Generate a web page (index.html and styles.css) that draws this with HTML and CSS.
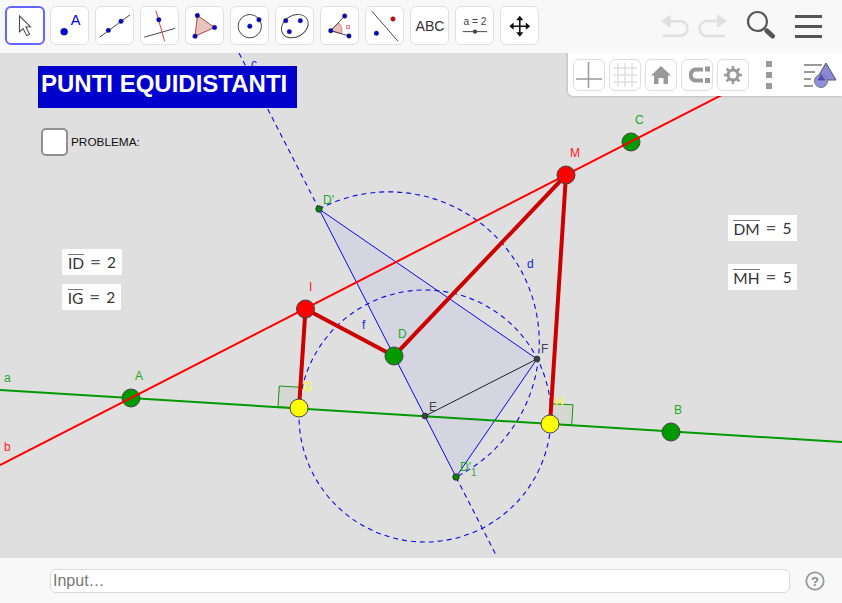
FILE: index.html
```html
<!DOCTYPE html>
<html lang="it">
<head>
<meta charset="utf-8">
<title>Punti equidistanti</title>
<link rel="stylesheet" href="styles.css">
</head>
<body>
<div class="app">
  <header class="toolbar">
    <div class="tools">
      <button class="tool active"><svg viewBox="0 0 38 38"><path class="arrow" d="M13 8.500 L25 20.500 L20 20.700 L24 28.500 L20.800 30 L17 22.300 L13 26 Z"/></svg></button>
      <button class="tool"><svg viewBox="0 0 38 38"><circle class="pt" cx="13.500" cy="25.300" r="3.600"/><text class="ic-a" x="25.300" y="19">A</text></svg></button>
      <button class="tool"><svg viewBox="0 0 38 38"><line class="ink" x1="3.700" y1="31" x2="35" y2="8"/><circle class="pt" cx="12.700" cy="24" r="2.300"/><circle class="pt" cx="25.700" cy="14.700" r="2.300"/></svg></button>
      <button class="tool"><svg viewBox="0 0 38 38"><line class="ink" x1="3.300" y1="31" x2="35" y2="22"/><line class="rd" x1="15.300" y1="3.700" x2="24.300" y2="35.300"/><circle class="pt" cx="18.300" cy="13" r="2.300"/></svg></button>
      <button class="tool"><svg viewBox="0 0 38 38"><path class="wedge" d="M11.700 8.700 L29.300 21 L9.300 30 Z"/><circle class="pt" cx="11.700" cy="8.700" r="2.300"/><circle class="pt" cx="29.300" cy="21" r="2.300"/><circle class="pt" cx="9.300" cy="30" r="2.300"/></svg></button>
      <button class="tool"><svg viewBox="0 0 38 38"><circle class="ink" cx="19.300" cy="19.700" r="12"/><circle class="pt" cx="19.300" cy="19.700" r="2.300"/><circle class="pt" cx="28.700" cy="13" r="2.300"/></svg></button>
      <button class="tool"><svg viewBox="0 0 38 38"><ellipse class="ink" cx="19.300" cy="19.700" rx="14.500" ry="11" transform="rotate(-30 19.300 19.700)"/><circle class="pt" cx="10" cy="14" r="2.300"/><circle class="pt" cx="25" cy="14" r="2.300"/><circle class="pt" cx="13.700" cy="25.300" r="2.300"/></svg></button>
      <button class="tool"><svg viewBox="0 0 38 38"><path class="wedge-a" d="M10 24.300 L18 16 A12 12 0 0 1 21 27.500 Z"/><path class="ink" d="M24.300 9.300 L10 24.300 L28.700 29.700"/><circle class="pt" cx="24.300" cy="9.300" r="2.300"/><circle class="pt" cx="10" cy="24.300" r="2.300"/><circle class="pt" cx="28.700" cy="29.700" r="2.300"/><text class="ic-alpha" x="25.500" y="22.500">α</text></svg></button>
      <button class="tool"><svg viewBox="0 0 38 38"><line class="ink" x1="6" y1="4.300" x2="33" y2="35.300"/><circle class="pt" cx="10.700" cy="27" r="2.300"/><circle class="pt-red" cx="27.700" cy="12.300" r="2.300"/></svg></button>
      <button class="tool"><svg viewBox="0 0 38 38"><text class="ic-abc" x="19.500" y="24.800">ABC</text></svg></button>
      <button class="tool"><svg viewBox="0 0 38 38"><text class="ic-slider" x="19.500" y="18">a = 2</text><line class="ink" x1="7" y1="25.300" x2="32" y2="25.300"/><circle class="dark" cx="19.500" cy="25.300" r="2.200"/></svg></button>
      <button class="tool"><svg viewBox="0 0 38 38"><path class="ink-bold" d="M19.300 11 V28.500 M10.500 19.700 H28"/><path class="fill-k" d="M19.300 9 L23 13.500 H15.600 Z M19.300 30.500 L23 26 H15.600 Z M8.500 19.700 L13 16 V23.400 Z M30 19.700 L25.500 16 V23.400 Z"/></svg></button>
    </div>
    <div class="actions">
      <svg class="hist" viewBox="0 0 30 26"><path class="hist-line" d="M5 8 H20 A7.500 7.500 0 0 1 20 23 H2"/><path class="hist-head" d="M0 8 L10 1 V15 Z"/></svg>
      <svg class="hist" viewBox="0 0 30 26"><path class="hist-line" d="M25 8 H10 A7.500 7.500 0 0 0 10 23 H28"/><path class="hist-head" d="M30 8 L20 1 V15 Z"/></svg>
      <svg class="search" viewBox="0 0 30 30"><circle class="lens" cx="11.500" cy="11.500" r="9.500"/><path class="handle" d="M19 19 L21 21"/><path class="handle-bold" d="M21 21 L26.500 26"/></svg>
      <div class="burger"><span></span><span></span><span></span></div>
    </div>
  </header>

  <main class="canvas">
    <svg class="geo" viewBox="0 0 842 505">
      <g transform="translate(0,-53)">
        <path class="kite" d="M319 209 L537 359 L456 477 Z"/>
        <path class="angle-mark" d="M279.300 386 L278 406.800 L299 408 L301 387.300 Z"/>
        <path class="angle-mark" d="M552 404 L573 404.700 L571.700 425.300 L550 424 Z"/>
        <circle class="dash-arc" cx="425" cy="416" r="126"/>
        <path class="dash-arc" d="M319 209 A150.500 150.500 0 1 1 456 477"/>
        <line class="dash-line" x1="239" y1="53" x2="319" y2="209"/>
        <line class="dash-line" x1="456" y1="477" x2="496" y2="555"/>
        <path class="blue-line" d="M319 209 L537 359 L456 477 Z"/>
        <line class="black-line" x1="425" y1="416" x2="537" y2="359"/>
        <line class="green-line" x1="0" y1="390" x2="842" y2="442"/>
        <circle class="p-green" cx="131" cy="398" r="9"/>
        <circle class="p-green" cx="631" cy="142" r="9"/>
        <circle class="p-green" cx="671" cy="432" r="9"/>
        <line class="red-line" x1="0" y1="465" x2="740" y2="85.700"/>
        <path class="seg" d="M305.500 309 L299 408 M305.500 309 L394 356 L566 175 L550 424"/>
        <circle class="p-red" cx="305.500" cy="309" r="9"/>
        <circle class="p-red" cx="566" cy="175" r="9"/>
        <circle class="p-green" cx="394" cy="356" r="9"/>
        <circle class="p-yellow" cx="299" cy="408" r="9"/>
        <circle class="p-yellow" cx="550" cy="424" r="9"/>
        <circle class="p-small" cx="425" cy="416" r="3"/>
        <circle class="p-small" cx="537" cy="359" r="3"/>
        <circle class="p-tiny" cx="319" cy="209" r="3.200"/>
        <circle class="p-tiny" cx="456" cy="477" r="3.200"/>
        <text class="lb lb-blue" x="251" y="68">c</text>
        <text class="lb lb-green" x="4" y="382">a</text>
        <text class="lb lb-red" x="4" y="451">b</text>
        <text class="lb lb-green" x="135" y="380">A</text>
        <text class="lb lb-green" x="674" y="414">B</text>
        <text class="lb lb-green" x="635" y="124">C</text>
        <text class="lb lb-red" x="570" y="157">M</text>
        <text class="lb lb-red" x="309" y="291">I</text>
        <text class="lb lb-green" x="398" y="338">D</text>
        <text class="lb lb-blue" x="362" y="329">f</text>
        <text class="lb lb-yellow" x="303" y="391">G</text>
        <text class="lb lb-dark" x="429" y="411">E</text>
        <text class="lb lb-dark" x="541" y="353">F</text>
        <text class="lb lb-yellow" x="555" y="406">H</text>
        <text class="lb lb-green" x="323" y="204">D'</text>
        <text class="lb lb-green" x="460" y="471">D'</text>
        <text class="lb-sub" x="471" y="476">1</text>
        <text class="lb lb-blue" x="527" y="268">d</text>
      </g>
    </svg>

    <h1 class="title">PUNTI EQUIDISTANTI</h1>
    <label class="check"><span class="box"></span><span>PROBLEMA:</span></label>

    <div class="value v-id"><span class="over">ID</span><span class="eq">=</span><span>2</span></div>
    <div class="value v-ig"><span class="over">IG</span><span class="eq">=</span><span>2</span></div>
    <div class="value v-dm"><span class="over">DM</span><span class="eq">=</span><span>5</span></div>
    <div class="value v-mh"><span class="over">MH</span><span class="eq">=</span><span>5</span></div>

    <aside class="style-bar">
      <button class="mini"><svg viewBox="0 0 30 30"><path class="axes" d="M14.500 2 V28 M2 19 H28"/></svg></button>
      <button class="mini"><svg viewBox="0 0 30 30"><path class="grid" d="M8 3 V27 M15 3 V27 M22 3 V27 M3 8 H27 M3 15 H27 M3 22 H27"/></svg></button>
      <button class="mini"><svg viewBox="0 0 30 30"><path class="g-fill" d="M15 6 L25 15.500 H22 V24 H17.500 V18 H12.500 V24 H8 V15.500 H5 Z"/></svg></button>
      <button class="mini"><svg viewBox="0 0 30 30"><path class="magnet" d="M21 9.500 H13 A5.700 5.700 0 0 0 13 20.500 H21"/><path class="g-fill" d="M23 6.500 H28 V11.500 H23 Z M23 18 H28 V23 H23 Z"/></svg></button>
      <button class="mini"><svg viewBox="0 0 30 30"><circle class="gear" cx="15" cy="15" r="5"/><path class="gear-teeth" d="M15 6 V9.500 M15 20.500 V24 M6 15 H9.500 M20.500 15 H24 M8.600 8.600 L11 11 M19 19 L21.400 21.400 M8.600 21.400 L11 19 M19 11 L21.400 8.600"/></svg></button>
      <div class="dots"><span></span><span></span><span></span></div>
      <svg class="style-icon" viewBox="0 0 34 26"><path class="s-lines" d="M1 3 H19 M1 10 H12 M1 17 H8 M1 24 H10"/><path class="s-tri" d="M23 1 L33 18 H13 Z"/><circle class="s-circ" cx="18" cy="19" r="6.500"/><path class="s-core" d="M18 13 L22 18 H15 Z"/></svg>
    </aside>
  </main>

  <footer class="inputbar">
    <input class="input" type="text" placeholder="Input…">
    <svg class="help" viewBox="0 0 20 20"><circle class="help-ring" cx="10" cy="10" r="8.700"/><text class="help-q" x="10" y="14.500">?</text></svg>
  </footer>
</div>
</body>
</html>
```
FILE: styles.css
```css
* { box-sizing: border-box; }
html, body { margin: 0; height: 100%; overflow: hidden; }
body { font-family: "Liberation Sans", Arial, sans-serif; }

.app { display: flex; flex-direction: column; width: 842px; height: 603px; background: #f8f8f8; }

/* top toolbar */
.toolbar { height: 53px; flex: none; display: flex; justify-content: space-between; align-items: flex-start; background: #f8f8f8; padding: 6px 20px 0 5px; }
.tools { display: flex; gap: 6px; }
.tool { width: 39px; height: 39px; padding: 0; background: #fff; border: 1px solid #e0e0e0; border-radius: 6px; display: block; }
.tool.active { border: 2px solid #6666ff; width: 40px; margin-right: -1px; }
.tool svg { display: block; width: 37px; height: 37px; }
.tool.active svg { width: 36px; height: 35px; }

.arrow { fill: #fff; stroke: #444; stroke-width: 1.100; }
.pt { fill: #0000dd; stroke: #222; stroke-width: .5; }
.pt-red { fill: #ee0000; stroke: #222; stroke-width: .5; }
.ink { fill: none; stroke: #444; stroke-width: 1; }
.ink-bold { fill: none; stroke: #111; stroke-width: 1.600; }
.fill-k { fill: #111; }
.dark { fill: #444; }
.rd { stroke: #ee3333; stroke-width: 1; }
.wedge { fill: #e8c4c0; stroke: #b04040; stroke-width: 1; }
.wedge-a { fill: #eac0bc; stroke: #cc6666; stroke-width: .8; }
.ic-a { fill: #0000dd; font-size: 15px; text-anchor: middle; }
.ic-alpha { fill: #e03030; font-size: 8px; }
.ic-abc { fill: #333; font-size: 14.500px; text-anchor: middle; }
.ic-slider { fill: #444; font-size: 10.500px; text-anchor: middle; }

.actions { display: flex; align-items: center; margin-top: 6px; }
.hist { width: 30px; height: 26px; margin-right: 6px; }
.hist:first-child { width: 29px; margin-right: 7px; }
.hist-line { fill: none; stroke: #e0e0e0; stroke-width: 2.500; }
.hist-head { fill: #e0e0e0; }
.search { width: 30px; height: 30px; margin-left: 13px; margin-top: -2px; }
.lens { fill: none; stroke: #555; stroke-width: 2.200; }
.handle { stroke: #555; stroke-width: 2; }
.handle-bold { stroke: #555; stroke-width: 5; stroke-linecap: round; }
.burger { display: flex; flex-direction: column; gap: 7px; width: 27px; margin-left: 19px; }
.burger span { display: block; height: 3px; background: #555; }

/* graphics view */
.canvas { position: relative; flex: 1; background: #dfdfdf; overflow: hidden; }
.geo { position: absolute; left: 0; top: 0; width: 842px; height: 505px; }

.kite { fill: #d5d5e2; }
.angle-mark { fill: #d5d8d2; stroke: #008a00; stroke-width: .9; }
.dash-arc { fill: none; stroke: #0a0ae6; stroke-width: 1.100; stroke-dasharray: 5 4; }
.dash-line { stroke: #0a0ae6; stroke-width: 1.100; stroke-dasharray: 5 4; }
.blue-line { fill: none; stroke: #0a0ae6; stroke-width: 1; }
.black-line { stroke: #222; stroke-width: 1; }
.green-line { stroke: #009900; stroke-width: 2; }
.red-line { stroke: #ff0000; stroke-width: 2; }
.seg { fill: none; stroke: #cc0000; stroke-width: 4; }
.p-green { fill: #009900; stroke: #444; stroke-width: 1; }
.p-red { fill: #ff0000; stroke: #444; stroke-width: 1; }
.p-yellow { fill: #ffff00; stroke: #444; stroke-width: 1; }
.p-small { fill: #404040; stroke: #222; stroke-width: .6; }
.p-tiny { fill: #008800; stroke: #333; stroke-width: 1; }
.lb { font-size: 12px; }
.lb-sub { font-size: 10px; fill: #33aa33; }
.lb-blue { fill: #2020dd; }
.lb-green { fill: #22aa22; }
.lb-red { fill: #ff2020; }
.lb-yellow { fill: #ffff22; }
.lb-dark { fill: #444; }

.title { position: absolute; left: 38px; top: 13px; width: 259px; height: 42px; margin: 0; padding: 3px 0 0 3px; background: #0000cc; color: #fff; font-size: 24px; line-height: 30px; font-weight: 700; white-space: nowrap; }
.check { position: absolute; left: 41px; top: 75px; display: flex; align-items: center; gap: 3px; font-size: 11.800px; color: #111; }
.box { width: 27px; height: 28px; background: #fff; border: 2px solid #909090; border-radius: 5px; }

.value { position: absolute; height: 26px; display: flex; align-items: center; justify-content: center; gap: 6px; background: #fff; color: #333; font-family: Lato, sans-serif; font-size: 15.500px; font-weight: 400; }
.over { border-top: 1px solid #777; line-height: 16px; padding-top: 0; margin-top: 1px; }
.eq { color: #555; font-size: 19px; line-height: 20px; }
.v-id { left: 62px; top: 196px; width: 60px; }
.v-ig { left: 62px; top: 231px; width: 59px; }
.v-dm { left: 728px; top: 162px; width: 69px; }
.v-mh { left: 728px; top: 211px; width: 69px; }

/* style bar, floating over the view */
.style-bar { position: absolute; right: 0; top: 0; width: 274px; height: 43px; display: flex; align-items: center; gap: 4px; padding-left: 5px; background: #fff; border-bottom-left-radius: 5px; box-shadow: 0 0 3px rgba(0,0,0,.3); }
.mini { width: 32px; height: 32px; padding: 0; background: #fff; border: 1px solid #ddd; border-radius: 6px; }
.mini svg { display: block; width: 30px; height: 30px; }
.axes { stroke: #999; stroke-width: 1.500; fill: none; }
.grid { stroke: #e0e0e0; stroke-width: 1.500; fill: none; }
.g-fill { fill: #999; }
.magnet { fill: none; stroke: #999; stroke-width: 4; }
.gear { fill: none; stroke: #999; stroke-width: 3; }
.gear-teeth { stroke: #999; stroke-width: 2.600; }
.dots { display: flex; flex-direction: column; gap: 5px; margin-left: 13px; }
.dots span { display: block; width: 6px; height: 6px; background: #999; }
.style-icon { width: 34px; height: 26px; margin-left: 27px; }
.s-lines { stroke: #999; stroke-width: 1.800; fill: none; }
.s-tri { fill: #8888dd; stroke: #555; stroke-width: 1; }
.s-circ { fill: #8f8fe0; stroke: #777; stroke-width: 1; }
.s-core { fill: #4a4ae0; stroke: #444; stroke-width: .6; }

/* input bar */
.inputbar { height: 45px; flex: none; display: flex; align-items: center; padding-left: 50px; background: #f8f8f8; }
.input { width: 740px; height: 24px; padding: 0 2px; background: #fff; border: 1px solid #d8d8d8; border-radius: 6px; font-family: "Liberation Sans", sans-serif; font-size: 16px; outline: none; }
.input::placeholder { color: #777; opacity: 1; }
.help { width: 20px; height: 20px; margin-left: 15px; }
.help-ring { fill: none; stroke: #999; stroke-width: 1.800; }
.help-q { fill: #888; font-size: 13px; font-weight: 700; text-anchor: middle; }
```
